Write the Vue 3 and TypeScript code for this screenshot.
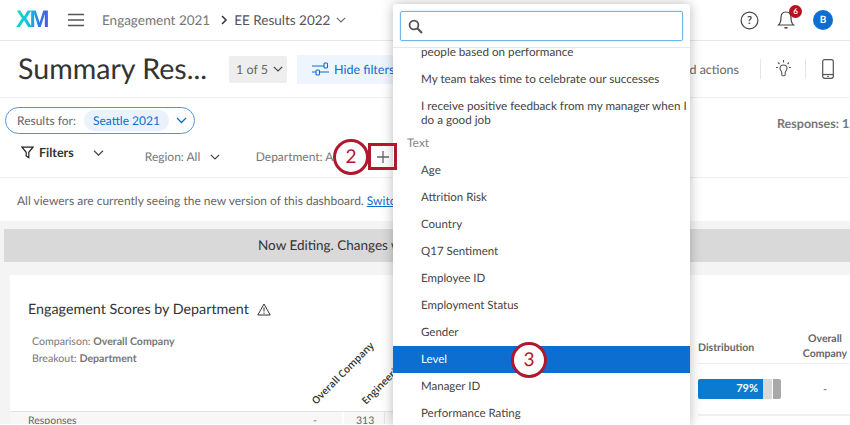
<script setup lang="ts">
interface MenuRow {
  label: string;
  kind?: 'group' | 'active' | 'question';
}

const menuRows: MenuRow[] = [
  { label: 'people based on performance', kind: 'question' },
  { label: 'My team takes time to celebrate our successes', kind: 'question' },
  { label: 'I receive positive feedback from my manager when I do a good job', kind: 'question' },
  { label: 'Text', kind: 'group' },
  { label: 'Age' },
  { label: 'Attrition Risk' },
  { label: 'Country' },
  { label: 'Q17 Sentiment' },
  { label: 'Employee ID' },
  { label: 'Employment Status' },
  { label: 'Gender' },
  { label: 'Level', kind: 'active' },
  { label: 'Manager ID' },
  { label: 'Performance Rating' },
  { label: 'Tenure' },
];
</script>

<template>
  <div class="page">
    <header class="topbar">
      <span class="logo">XM</span>
      <svg class="burger" width="18" height="14" viewBox="0 0 18 14" fill="none" stroke="#555" stroke-width="1.4">
        <path d="M1 1.5h16M1 7h16M1 12.5h16" />
      </svg>
      <span class="crumb">Engagement 2021</span>
      <svg width="8" height="10" viewBox="0 0 8 10" fill="none" stroke="#333" stroke-width="1.5">
        <path d="M2 1l4 4-4 4" />
      </svg>
      <span class="crumb crumb-current">EE Results 2022</span>
      <svg width="10" height="6" viewBox="0 0 10 6" fill="none" stroke="#666" stroke-width="1.1">
        <path d="M.8.8L5 5l4.2-4.2" />
      </svg>
      <div class="top-right">
        <svg width="19" height="19" viewBox="0 0 19 19" fill="none">
          <circle cx="9.5" cy="9.5" r="8.4" stroke="#444" stroke-width="1.2" />
          <text x="9.5" y="13.2" text-anchor="middle" class="help-mark">?</text>
        </svg>
        <span class="bell">
          <svg width="18" height="20" viewBox="0 0 18 20" fill="none" stroke="#444" stroke-width="1.2">
            <path d="M9 2c-3.300 0-5 2.500-5 5.500 0 3.500-.7 6-2.500 7.500h15C14.700 13.500 14 11 14 7.500 14 4.500 12.300 2 9 2z" />
            <path d="M7.500 17.800h3" stroke-width="1.600" />
          </svg>
          <span class="bell-count">6</span>
        </span>
        <span class="avatar">B</span>
      </div>
    </header>

    <section class="titlebar">
      <h1 class="title">Summary Res...</h1>
      <span class="pager">1 of 5
        <svg width="10" height="6" viewBox="0 0 10 6" fill="none" stroke="#444" stroke-width="1.2">
          <path d="M.8.8L5 5l4.200-4.200" />
        </svg>
      </span>
      <span class="hide-filters">
        <svg width="17" height="14" viewBox="0 0 17 14" fill="none" stroke="#0b6ed0" stroke-width="1.100">
          <path d="M0 4h12M0 10h4M8 10h9" />
          <rect x="12" y="1" width="3.500" height="5" rx="1" />
          <rect x="4" y="8" width="3.500" height="5" rx="1" />
        </svg>
        Hide filters
      </span>
      <div class="title-right">
        <span class="actions">and actions</span>
        <span class="tool">
          <svg width="17" height="19" viewBox="0 0 17 19" fill="none" stroke="#555" stroke-width="1.100">
            <path d="M8.500 5c-2.200 0-3.500 1.600-3.500 3.300 0 1.900 1.500 2.600 1.800 4.200v2.300c0 .5.400.9.900.9h1.600c.5 0 .9-.4.900-.9v-2.300c.3-1.600 1.800-2.300 1.800-4.200C12 6.600 10.700 5 8.500 5z" />
            <path d="M8.500 0v2.500M1 7.500h2M14 7.500h2M3 2.500l1.500 1.500M14 2.500L12.500 4" />
          </svg>
        </span>
        <span class="tool">
          <svg width="12" height="20" viewBox="0 0 12 20" fill="none" stroke="#555" stroke-width="1.200">
            <rect x=".7" y=".7" width="10.600" height="18.600" rx="2" />
            <path d="M.7 15.500h10.600" />
            <path d="M5.200 17.400h1.600" stroke-width="1.400" />
          </svg>
        </span>
      </div>
    </section>

    <section class="results">
      <div class="results-pill">
        <span>Results for:</span>
        <span class="chip">Seattle 2021</span>
        <svg width="11" height="7" viewBox="0 0 11 7" fill="none" stroke="#0b6ed0" stroke-width="1.300">
          <path d="M1 1l4.500 4.500L10 1" />
        </svg>
      </div>
      <span class="responses">Responses: 1,024</span>
    </section>

    <section class="filters">
      <svg class="filters-icon" width="13" height="13" viewBox="0 0 13 13" fill="none" stroke="#222" stroke-width="1.200">
        <path d="M1 1.200h11L7.800 6.300v5.300L5.200 10V6.300z" />
      </svg>
      <b class="filters-label">Filters</b>
      <svg class="filters-chev" width="11" height="6" viewBox="0 0 11 6" fill="none" stroke="#444" stroke-width="1.200">
        <path d="M1 .8l4.500 4.400L10 .8" />
      </svg>
      <span class="filter">Region: All
        <svg width="10" height="6" viewBox="0 0 10 6" fill="none" stroke="#444" stroke-width="1.200">
          <path d="M.8.8L5 5l4.200-4.200" />
        </svg>
      </span>
      <span class="filter filter-dept">Department: All</span>
      <svg class="plus" width="12" height="12" viewBox="0 0 12 12" fill="none" stroke="#666" stroke-width="1.300">
        <path d="M6 0v12M0 6h12" />
      </svg>
    </section>

    <section class="notice">
      All viewers are currently seeing the new version of this dashboard.
      <a class="notice-link">Switch to the old version</a>
    </section>

    <main class="canvas">
      <div class="editing">Now Editing. Changes will not be visible until published.</div>
      <article class="card">
        <div class="pane-left">
          <h2 class="card-title">
            Engagement Scores by Department
            <svg width="14" height="13" viewBox="0 0 14 13" fill="none" stroke="#333" stroke-width="1">
              <path d="M7 1L.8 12h12.400z" />
              <path d="M7 4.500v4M7 9.500v1.300" />
            </svg>
          </h2>
          <p class="meta">Comparison: <b>Overall Company</b></p>
          <p class="meta">Breakout: <b>Department</b></p>
          <div class="rot-heads">
            <span class="rot rot-overall">Overall Company</span>
            <span class="rot rot-eng">Engineering</span>
          </div>
          <div class="row">
            <span class="row-label">Responses</span>
            <span class="row-dash">-</span>
            <span class="row-num">313</span>
          </div>
        </div>
        <div class="pane-right">
          <div class="dist-head">
            <span class="dist-col">Distribution</span>
            <span class="over-col">Overall<br />Company</span>
          </div>
          <div class="dist-row">
            <div class="bar">
              <span class="bar-main">79%</span>
              <span class="bar-mid"></span>
              <span class="bar-end"></span>
            </div>
            <span class="over-dash">-</span>
          </div>
        </div>
      </article>
    </main>

    <aside class="dropdown">
      <div class="search-wrap">
        <div class="search">
          <svg width="15" height="15" viewBox="0 0 15 15" fill="none" stroke="#555" stroke-width="1.800">
            <circle cx="6" cy="6" r="4.400" />
            <path d="M9.300 9.300L14 14" stroke-width="2.200" />
          </svg>
        </div>
      </div>
      <div class="menu">
        <ul class="menu-list">
          <li
            v-for="row in menuRows"
            :key="row.label"
            class="menu-row"
            :class="row.kind ? `menu-row--${row.kind}` : ''"
          >
            {{ row.label }}
          </li>
        </ul>
      </div>
    </aside>

    <span class="step step-2">2</span>
    <span class="plus-frame"></span>
    <span class="step step-3">3</span>
  </div>
</template>

<style scoped>
.page {
  position: relative;
  width: 850px;
  height: 425px;
  overflow: hidden;
  background: #fff;
  font-family: Lato, "Noto Sans", sans-serif;
  text-rendering: geometricPrecision;
  font-size: 12px;
  color: #444;
}
.topbar {
  display: flex;
  align-items: center;
  height: 40px;
  padding-left: 16px;
  border-bottom: 1px solid #e8e8e8;
}
.logo {
  width: 32px;
  font-family: "Liberation Sans", sans-serif;
  font-size: 24px;
  font-weight: 700;
  letter-spacing: -2.500px;
  background: linear-gradient(100deg, #1ce0b0 0%, #14c0e0 40%, #2a7be8 70%, #5a4be0 100%);
  -webkit-background-clip: text;
  background-clip: text;
  color: transparent;
}
.burger {
  margin-left: 19px;
  margin-right: 17px;
}
.crumb {
  font-size: 13.500px;
  color: #777;
  margin-right: 10px;
}
.crumb-current {
  color: #555;
  margin-left: 6px;
  margin-right: 6px;
}
.top-right {
  display: flex;
  align-items: center;
  margin-left: auto;
  gap: 18px;
  padding-right: 17px;
}
.help-mark {
  font-size: 11px;
  font-weight: 700;
  fill: #444;
}
.bell {
  position: relative;
  display: flex;
}
.bell-count {
  position: absolute;
  top: -5px;
  right: -7px;
  width: 13px;
  height: 13px;
  border-radius: 50%;
  background: #b5121b;
  color: #fff;
  font-size: 8px;
  font-weight: 700;
  line-height: 13px;
  text-align: center;
}
.avatar {
  width: 20px;
  height: 20px;
  border-radius: 50%;
  background: #0b6ed0;
  color: #fff;
  font-size: 10px;
  font-weight: 700;
  line-height: 20px;
  text-align: center;
}
.titlebar {
  display: flex;
  align-items: center;
  height: 56px;
  padding-left: 18px;
  border-bottom: 1px solid #eee;
}
.title {
  margin: 0;
  width: 211px;
  font-size: 28.600px;
  font-weight: 400;
  color: #333;
  white-space: nowrap;
}
.pager {
  display: flex;
  align-items: center;
  gap: 5px;
  width: 58px;
  height: 27px;
  box-sizing: border-box;
  padding-left: 7px;
  background: #eeeeee;
  border-radius: 2px;
  font-size: 12.500px;
  color: #666;
}
.hide-filters {
  display: flex;
  align-items: center;
  gap: 5px;
  margin-left: 10px;
  width: 200px;
  height: 29px;
  box-sizing: border-box;
  padding-left: 15px;
  background: #eef5fc;
  font-size: 12.500px;
  color: #0b6ed0;
  white-space: nowrap;
}
.title-right {
  display: flex;
  align-items: center;
  margin-left: auto;
  height: 20px;
}
.actions {
  font-size: 12.500px;
  color: #666;
  padding-right: 21px;
}
.tool {
  display: flex;
  justify-content: center;
  align-items: center;
  width: 44px;
  height: 20px;
  border-left: 1px solid #e6e6e6;
}
.results {
  display: flex;
  align-items: flex-end;
  justify-content: space-between;
  height: 36px;
  padding-left: 5px;
}
.results-pill {
  display: flex;
  align-items: center;
  width: 190px;
  height: 27px;
  box-sizing: border-box;
  padding-left: 11px;
  border: 1px solid #4f97dd;
  border-radius: 14px;
  font-size: 12px;
  color: #666;
  white-space: nowrap;
}
.chip {
  margin: 0 7px 0 8px;
  padding: 3px 9px;
  border-radius: 10px;
  background: #eaf3fb;
  color: #0b6ed0;
}
.responses {
  width: 73px;
  margin-bottom: 3px;
  overflow: hidden;
  white-space: nowrap;
  font-weight: 700;
  font-size: 12.500px;
  color: #777;
}
.filters {
  display: flex;
  align-items: center;
  height: 43px;
  padding-left: 21px;
  border-bottom: 1px solid #eee;
}
.filters-icon {
  margin-bottom: 6px;
}
.filters-label {
  margin: 0 0 6px 5px;
  font-size: 12.500px;
  color: #333;
}
.filters-chev {
  margin: 0 41px 6px 19px;
}
.filter {
  display: flex;
  align-items: center;
  gap: 10px;
  width: 111px;
  margin-top: 2px;
  font-size: 12px;
  color: #777;
  white-space: nowrap;
}
.filter-dept {
  width: 121px;
}
.plus {
  flex: none;
  margin-top: 2px;
}
.notice {
  height: 43px;
  padding-left: 17px;
  font-size: 12px;
  line-height: 45px;
  color: #666;
  white-space: nowrap;
}
.notice-link {
  color: #0b6ed0;
  text-decoration: underline;
}
.canvas {
  height: 203px;
  padding-top: 8px;
  background: #f4f4f4;
  box-sizing: border-box;
  overflow: hidden;
}
.editing {
  height: 33px;
  margin-left: 4px;
  padding-left: 254px;
  background: #d9d9d9;
  font-size: 13.500px;
  line-height: 32px;
  color: #333;
  white-space: nowrap;
}
.card {
  display: flex;
  justify-content: space-between;
  height: 160px;
  margin: 13px 0 0 10px;
  background: #fff;
}
.pane-left {
  width: 400px;
}
.card-title {
  display: flex;
  align-items: center;
  gap: 8px;
  margin: 0;
  padding: 25px 0 0 18px;
  font-size: 14.300px;
  font-weight: 400;
  color: #333;
  line-height: 19px;
}
.meta {
  margin: 0;
  padding-left: 22px;
  font-size: 10.600px;
  line-height: 17px;
  color: #777;
}
.card-title + .meta {
  margin-top: 15px;
}
.rot-heads {
  position: relative;
  height: 43px;
}
.rot {
  position: absolute;
  transform-origin: left bottom;
  transform: rotate(-45deg);
  font-family: "Open Sans", sans-serif;
  font-size: 10px;
  font-weight: 600;
  color: #333;
  white-space: nowrap;
}
.rot-overall {
  left: 308px;
  bottom: 4px;
}
.rot-eng {
  left: 358px;
  bottom: 4px;
}
.row {
  display: flex;
  height: 24px;
  border-top: 1px solid #e4e4e4;
  background: #f7f7f7;
  font-size: 10.500px;
  line-height: 19px;
  color: #666;
}
.row-label,
.row-dash,
.row-num {
  box-sizing: border-box;
}
.row-label {
  width: 298px;
  padding-left: 18px;
}
.row-dash {
  width: 36px;
  padding-left: 5px;
  border-right: 2px solid #fff;
}
.row-num {
  width: 41px;
  padding-left: 12px;
  border-right: 1px solid #e4e4e4;
}
.pane-right {
  width: 152px;
  padding-top: 46px;
}
.dist-head {
  display: flex;
  align-items: flex-end;
  height: 42px;
  border-bottom: 1px solid #eee;
  font-size: 10.500px;
  font-weight: 700;
  color: #666;
}
.dist-col {
  width: 102px;
  margin-bottom: 7px;
  line-height: 15px;
}
.over-col {
  width: 50px;
  margin-bottom: 2px;
  line-height: 14.500px;
  text-align: center;
}
.dist-row {
  display: flex;
  align-items: center;
  height: 50px;
  border-bottom: 2px solid #f0f0f0;
}
.bar {
  display: flex;
  width: 83px;
  height: 20px;
  margin-right: 19px;
  border-radius: 2px;
  overflow: hidden;
}
.bar-main {
  width: 65px;
  padding-right: 5px;
  box-sizing: border-box;
  background: #0a7bd0;
  color: #fff;
  font-size: 11px;
  font-weight: 700;
  line-height: 20px;
  text-align: right;
}
.bar-mid {
  width: 9px;
  margin-right: 1px;
  background: #d9d9d9;
}
.bar-end {
  flex: 1;
  background: #a8a8a8;
}
.over-dash {
  width: 50px;
  text-align: center;
  font-size: 11px;
  color: #666;
}
.dropdown {
  position: absolute;
  top: 4px;
  left: 393px;
  bottom: 0;
  width: 297px;
  display: flex;
  flex-direction: column;
  background: #fff;
  border-radius: 3px 3px 0 0;
  box-shadow: 0 0 12px rgba(0, 0, 0, 0.28);
}
.search-wrap {
  flex: none;
  height: 44px;
  box-sizing: border-box;
  padding: 7px;
  border-bottom: 1px solid #e8e8e8;
}
.search {
  display: flex;
  align-items: center;
  height: 30px;
  box-sizing: border-box;
  padding-left: 7px;
  border: 1px solid #6fb6ea;
  border-radius: 2px;
  box-shadow: 0 0 2px rgba(11, 110, 208, 0.3);
}
.menu {
  flex: 1;
  overflow: hidden;
}
.menu-list {
  list-style: none;
  margin: -10px 0 0;
  padding: 0;
}
.menu-row {
  padding: 6.500px 0 6.500px 28px;
  font-size: 11.500px;
  line-height: 14px;
  color: #444;
}
.menu-row--question {
  font-size: 11.700px;
}
.menu-row--group {
  padding: 3px 14px 7px;
  font-size: 12px;
  color: #888;
}
.menu-row--active {
  background: #0b6ed0;
  color: #fff;
}
.step {
  position: absolute;
  width: 36px;
  height: 36px;
  box-sizing: border-box;
  border: 3px solid #b0182e;
  border-radius: 50%;
  background: #fff;
  color: #b0182e;
  font-size: 19px;
  line-height: 30px;
  text-align: center;
}
.step-2 {
  left: 333px;
  top: 139px;
}
.step-3 {
  left: 511px;
  top: 342px;
}
.plus-frame {
  position: absolute;
  left: 368px;
  top: 143px;
  width: 29px;
  height: 27px;
  box-sizing: border-box;
  border: 3px solid #b0182e;
}
</style>
